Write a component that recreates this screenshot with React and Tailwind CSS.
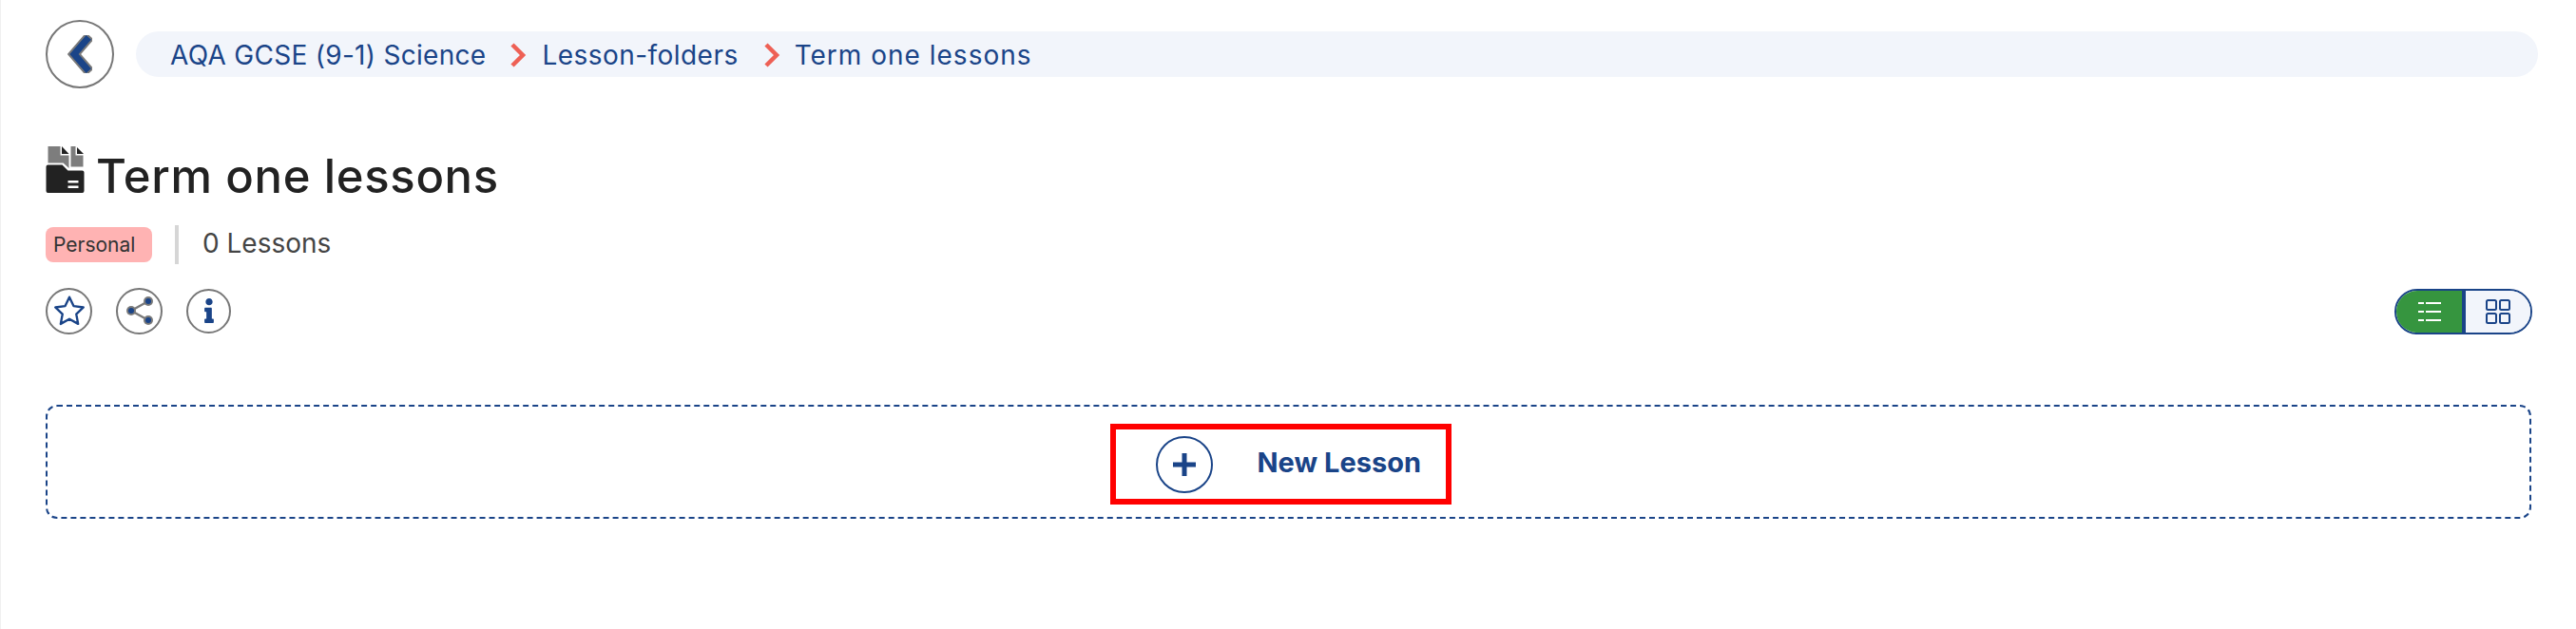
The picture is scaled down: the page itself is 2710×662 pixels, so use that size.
import React from "react";
import { FaInfo } from "react-icons/fa";

function Chevron() {
  return (
    <svg width="19" height="28" viewBox="0 0 19 28" className="shrink-0">
      <path d="M3 3 L14 14 L3 25" fill="none" stroke="#ee6055" strokeWidth="4.5" />
    </svg>
  );
}

function FolderIcon() {
  return (
    <svg width="41" height="50" viewBox="4.5 4 41 50" className="shrink-0">
      <path d="M7 4 H20 V13.5 H29 V27 L23 21.5 H7 Z" fill="#7d7d7d" />
      <path d="M21.5 4 V12 H29 Z" fill="#222222" />
      <path d="M31 4 H36 V13.5 H44 V25.5 H31 Z" fill="#7d7d7d" />
      <path d="M37.5 5 V12 H44.5 Z" fill="#222222" />
      <path d="M7 23.5 H22 L28 29.5 H43 Q45 29.5 45 31.5 V51 Q45 53 43 53 H7 Q5 53 5 51 V25.5 Q5 23.5 7 23.5 Z" fill="#222222" />
      <rect x="28" y="40" width="11" height="2.5" fill="#ffffff" />
      <rect x="28" y="45.5" width="11" height="2.5" fill="#ffffff" />
    </svg>
  );
}

function RoundIcon({ children, size = "w-[49px] h-[49px]" }) {
  return (
    <button className={`${size} rounded-full border-2 border-[#777777] bg-white flex items-center justify-center`}>
      {children}
    </button>
  );
}

export default function App() {
  return (
    <div className="min-h-screen bg-white border-l border-[#f0f0f0] pl-[47px] pr-[40px] pt-[21px] font-['Inter',sans-serif]">
      {/* breadcrumb row */}
      <div className="flex items-center gap-[23px]">
        <button className="w-[72px] h-[72px] rounded-full border-2 border-[#777777] flex items-center justify-center shrink-0">
          <svg width="26" height="40" viewBox="0 0 26 40">
            <path d="M20 5 L7 20 L20 35" fill="none" stroke="#7a7a7a" strokeWidth="11" strokeLinecap="square" />
            <path d="M20 5 L7 20 L20 35" fill="none" stroke="#1a4488" strokeWidth="7" strokeLinecap="square" />
          </svg>
        </button>
        <nav className="flex-1 h-[48px] rounded-full bg-[#f2f5fb] flex items-center pl-[36px] pt-[2px] text-[#1a4488] text-[28px] tracking-[0.3px]">
          <span>AQA GCSE (9-1) Science</span>
          <span className="ml-[25px] mr-[15px]"><Chevron /></span>
          <span className="tracking-[0.45px]">Lesson-folders</span>
          <span className="ml-[26px] mr-[14px]"><Chevron /></span>
          <span className="tracking-[1px]">Term one lessons</span>
        </nav>
      </div>

      {/* title */}
      <div className="flex items-end gap-[12px] mt-[61px]">
        <FolderIcon />
        <h1 className="text-[49px] leading-[52px] -mb-[8px] font-medium text-[#222222] tracking-[0.65px]">Term one lessons</h1>
      </div>

      <div className="flex items-center mt-[33px]">
        <span className="w-[112px] h-[37px] rounded-[8px] bg-[#ffb3b3] flex items-center pl-[8px] text-[21px] text-[#333333]">Personal</span>
        <span className="w-[4px] h-[41px] bg-[#d6d6d6] ml-[24px]"></span>
        <span className="ml-[25px] -mt-[3px] text-[28px] text-[#444444]">0 Lessons</span>
      </div>

      {/* actions + view switch */}
      <div className="flex items-center justify-between mt-[24px] pr-[6px]">
        <div className="flex items-center gap-[25px]">
          <RoundIcon>
            <svg width="36" height="34" viewBox="0 0 24 23">
              <path d="M12 1.8 L15 8.2 L22 9.1 L16.9 13.9 L18.2 20.9 L12 17.4 L5.8 20.9 L7.1 13.9 L2 9.1 L9 8.2 Z" fill="none" stroke="#1a4488" strokeWidth="1.6" strokeLinejoin="round" />
            </svg>
          </RoundIcon>
          <RoundIcon>
            <svg width="30" height="30" viewBox="0 0 30 30">
              <path d="M6 15 L24 5 M6 15 L24 25" stroke="#7a7a7a" strokeWidth="2.5" />
              <circle cx="6" cy="15" r="5" fill="#7a7a7a" />
              <circle cx="24" cy="5" r="5" fill="#7a7a7a" />
              <circle cx="24" cy="25" r="5" fill="#7a7a7a" />
              <circle cx="6" cy="15" r="3" fill="#1a4488" />
              <circle cx="24" cy="5" r="3" fill="#1a4488" />
              <circle cx="24" cy="25" r="3" fill="#1a4488" />
            </svg>
          </RoundIcon>
          <RoundIcon size="w-[47px] h-[47px]">
            <FaInfo className="text-[#1a4488] w-[26px] h-[26px]" />
          </RoundIcon>
        </div>
        <div className="w-[145px] h-[48px] mt-[2px] rounded-full border-2 border-[#1a4488] flex overflow-hidden">
          <div className="w-[73px] bg-[#36953f] border-r-4 border-[#1a4488] flex items-center justify-center">
            <svg width="24" height="20" viewBox="0 0 24 20">
              <g stroke="#ffffff" strokeWidth="2">
                <path d="M0 1 H6 M8 1 H24 M0 10 H6 M8 10 H24 M0 19 H6 M8 19 H24" />
              </g>
            </svg>
          </div>
          <div className="flex-1 bg-[#f2f5fb] flex items-center justify-center">
            <svg width="26" height="26" viewBox="0 0 26 26" fill="none" stroke="#1a4488" strokeWidth="2">
              <rect x="1" y="1" width="10" height="10" rx="1.5" />
              <rect x="15" y="1" width="10" height="10" rx="1.5" />
              <rect x="1" y="15" width="10" height="10" rx="1.5" />
              <rect x="15" y="15" width="10" height="10" rx="1.5" />
            </svg>
          </div>
        </div>
      </div>

      {/* new lesson */}
      <div className="mt-[74px] mr-[7px] h-[120px] rounded-[12px] border-2 border-dashed border-[#1a4488] flex items-center justify-center pr-[17px] pt-[5px]">
        <button className="w-[359px] h-[85px] border-[6px] border-[#ff0000] flex items-center pl-[42px] text-[#1a4488]">
          <span className="w-[60px] h-[60px] rounded-full border-2 border-[#1a4488] flex items-center justify-center shrink-0">
            <svg width="26" height="26" viewBox="0 0 26 26">
              <path d="M13 1 V25 M1 13 H25" stroke="#1a4488" strokeWidth="5" />
            </svg>
          </span>
          <span className="ml-[47px] -mt-[3px] text-[29px] font-bold whitespace-nowrap">New Lesson</span>
        </button>
      </div>
    </div>
  );
}
